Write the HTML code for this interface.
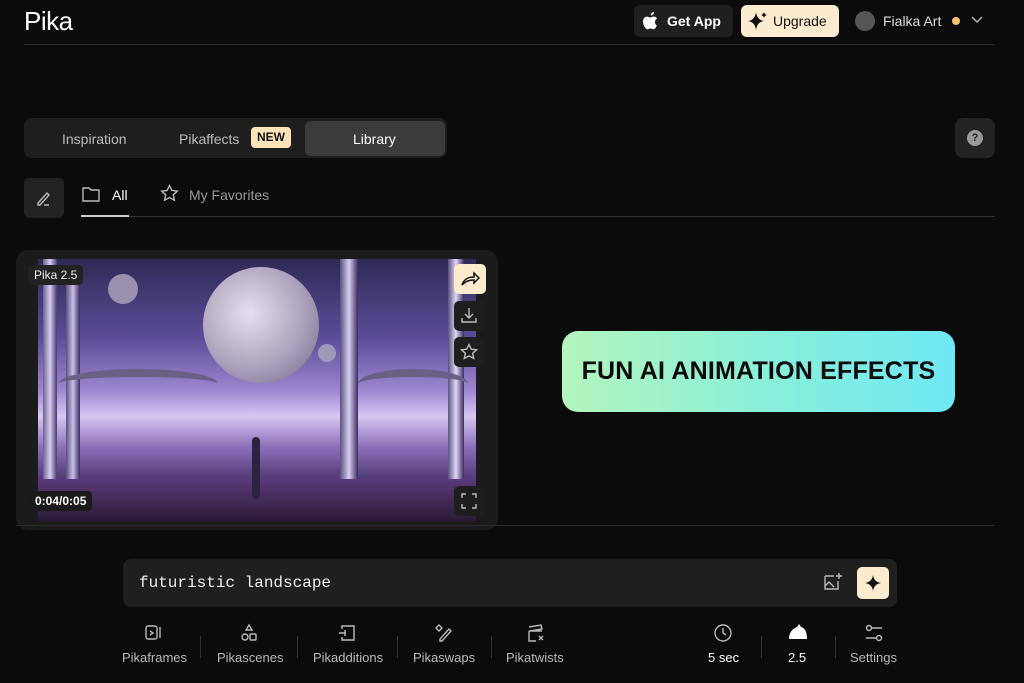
<!DOCTYPE html>
<html><head><style>
*{box-sizing:border-box;margin:0;padding:0}
body{width:1024px;height:683px;background:#0b0b0b;font-family:"Liberation Sans",sans-serif;color:#ddd;position:relative;overflow:hidden}
.a{position:absolute}
.t{font-size:13px;color:#bbb}
.ic{stroke:#bbb;fill:none;stroke-width:1.4}
</style></head><body>
<div class="a" style="left:24px;top:6px;font-size:26px;color:#fff;letter-spacing:-0.5px">Pika</div>
<div class="a" style="left:634px;top:5px;width:99px;height:32px;background:#1f1f1f;border-radius:6px"></div>
<svg class="a" style="left:642px;top:11px" width="18" height="20" viewBox="0 0 18 20"><path d="M12 1c0 2-1.5 3.5-3.3 3.5C8.5 2.6 10 1.2 12 1zM14.8 14.5c-.7 1.6-1.8 3.8-3.3 3.8-1.3 0-1.6-.8-3-.8s-1.8.8-3 .8C3.7 18.3 1 14.3 1 10.5 1 7.3 3 5.6 5 5.6c1.3 0 2.3.9 3.1.9.8 0 2-.9 3.5-.9.6 0 2.4.1 3.5 1.8-3 1.800-2.500 6 -.3 7.100z" fill="#fff"/></svg>
<div class="a" style="left:667px;top:13px;font-size:14px;font-weight:bold;color:#fff">Get App</div>
<div class="a" style="left:741px;top:5px;width:98px;height:32px;background:#fdebd0;border-radius:6px"></div>
<svg class="a" style="left:747px;top:10px" width="22" height="22" viewBox="0 0 22 22"><path d="M9 2 Q10 10 17 11 Q10 12 9 20 Q8 12 1 11 Q8 10 9 2Z" fill="#111"/><path d="M17 2 Q17.5 4.5 20 5 Q17.5 5.5 17 8 Q16.5 5.5 14 5 Q16.5 4.5 17 2Z" fill="#111"/></svg>
<div class="a" style="left:773px;top:13px;font-size:14px;color:#111">Upgrade</div>
<div class="a" style="left:855px;top:11px;width:20px;height:20px;border-radius:50%;background:#555"></div>
<div class="a" style="left:883px;top:13px;font-size:14px;color:#ddd">Fialka Art</div>
<div class="a" style="left:952px;top:17px;width:8px;height:8px;border-radius:50%;background:#f5c36b"></div>
<svg class="a" style="left:970px;top:15px" width="14" height="10"><path d="M2 2l5 5 5-5" class="ic"/></svg>
<div class="a" style="left:24px;top:44px;width:971px;height:1px;background:#2a2a2a"></div>

<div class="a" style="left:24px;top:118px;width:423px;height:40px;background:#1e1e1e;border-radius:8px"></div>
<div class="a" style="left:305px;top:121px;width:140px;height:35px;background:#3b3b3b;border-radius:6px"></div>
<div class="a t" style="left:62px;top:131px;font-size:14px">Inspiration</div>
<div class="a t" style="left:179px;top:131px;font-size:14px">Pikaffects</div>
<div class="a" style="left:251px;top:127px;width:40px;height:21px;background:#fde4b8;border-radius:4px;color:#111;font-size:12px;font-weight:bold;text-align:center;line-height:21px">NEW</div>
<div class="a" style="left:353px;top:131px;font-size:14px;color:#fff">Library</div>
<div class="a" style="left:955px;top:118px;width:40px;height:40px;background:#232323;border-radius:8px"></div>
<div class="a" style="left:967px;top:130px;width:16px;height:16px;border-radius:50%;background:#999;color:#222;font-size:11px;font-weight:bold;text-align:center;line-height:16px">?</div>

<div class="a" style="left:24px;top:178px;width:40px;height:40px;background:#222;border-radius:6px"></div>
<svg class="a" style="left:34px;top:188px" width="20" height="20"><path d="M4 15l9-10 2 2-9 10H4z M10 17h5" class="ic" stroke="#ddd"/></svg>
<svg class="a" style="left:81px;top:185px" width="20" height="18"><path d="M2 3h6l2 2h8v11H2z" class="ic" stroke="#eee"/></svg>
<div class="a" style="left:112px;top:187px;font-size:14px;color:#fff">All</div>
<svg class="a" style="left:160px;top:184px" width="19" height="19"><path d="M9.5 1.5l2.4 5 5.4.6-4 3.7 1.1 5.4-4.9-2.7-4.9 2.7 1.1-5.4-4-3.7 5.4-.6z" class="ic" stroke="#999"/></svg>
<div class="a" style="left:189px;top:187px;font-size:14px;color:#999">My Favorites</div>
<div class="a" style="left:81px;top:216px;width:914px;height:1px;background:#333"></div>
<div class="a" style="left:81px;top:215px;width:48px;height:2px;background:#ccc"></div>

<div class="a" style="left:16px;top:250px;width:482px;height:280px;background:#1b1b1b;border-radius:12px"></div>
<div class="a" style="left:38px;top:259px;width:438px;height:262px;overflow:hidden;background:linear-gradient(180deg,#2e2a55 0%,#5c4c98 30%,#9c86d0 50%,#d7c8f2 60%,#8a6fb8 72%,#4d3670 85%,#2a1d3a 100%)">
 <div class="a" style="left:165px;top:8px;width:116px;height:116px;border-radius:50%;background:radial-gradient(circle at 40% 40%,#e6e0ee,#a79cb8 60%,#6d6480)"></div>
 <div class="a" style="left:70px;top:15px;width:30px;height:30px;border-radius:50%;background:#9a90b0"></div>
 <div class="a" style="left:280px;top:85px;width:18px;height:18px;border-radius:50%;background:#a098b8"></div>
 <div class="a" style="left:5px;top:0;width:14px;height:262px;background:linear-gradient(90deg,#6a6090,#d8d0f0,#4a3a70)"></div>
 <div class="a" style="left:28px;top:10px;width:14px;height:230px;background:linear-gradient(90deg,#5a4f80,#c8c0e8,#3a2a60)"></div>
 <div class="a" style="left:302px;top:0;width:18px;height:240px;background:linear-gradient(90deg,#5a4f80,#d8d0f0,#3a2a60)"></div>
 <div class="a" style="left:410px;top:0;width:16px;height:262px;background:linear-gradient(90deg,#5a4f80,#e0d8f8,#3a2a60)"></div>
 <div class="a" style="left:20px;top:110px;width:160px;height:30px;border-radius:50%;border-top:8px solid #6a5f85"></div>
 <div class="a" style="left:320px;top:110px;width:110px;height:30px;border-radius:50%;border-top:8px solid #6a5f85"></div>
 <div class="a" style="left:0;top:220px;width:438px;height:42px;background:linear-gradient(180deg,#5a3a7a,#2a1a35)"></div>
 <div class="a" style="left:214px;top:178px;width:8px;height:62px;background:#2a2440;border-radius:4px"></div>
</div>
<div class="a" style="left:28px;top:265px;padding:3px 6px;background:#222;border-radius:4px;font-size:12px;color:#eee">Pika 2.5</div>
<div class="a" style="left:29px;top:491px;padding:3px 6px;background:#1a1a1a;border-radius:4px;font-size:12px;font-weight:bold;color:#fff">0:04/0:05</div>
<div class="a" style="left:454px;top:264px;width:32px;height:30px;background:#fdebd0;border-radius:5px"></div>
<svg class="a" style="left:460px;top:270px" width="20" height="18"><path d="M2 15c2-6 6-8 12-8V3l5 5-5 5V10c-5 0-8 1-12 5z" fill="none" stroke="#111" stroke-width="1.5"/></svg>
<div class="a" style="left:454px;top:301px;width:30px;height:30px;background:#1e1e1e;border-radius:5px"></div>
<svg class="a" style="left:460px;top:306px" width="18" height="18"><path d="M9 2v10M5 8l4 4 4-4M2 12v4h14v-4" class="ic" stroke="#eee"/></svg>
<div class="a" style="left:454px;top:337px;width:30px;height:30px;background:#1e1e1e;border-radius:5px"></div>
<svg class="a" style="left:460px;top:343px" width="18" height="18"><path d="M9 1.5l2.3 4.7 5.2.6-3.8 3.5 1 5.1L9 12.9l-4.7 2.5 1-5.1L1.5 6.8l5.2-.6z" class="ic" stroke="#eee"/></svg>
<div class="a" style="left:454px;top:486px;width:30px;height:30px;background:#1e1e1e;border-radius:5px"></div>
<svg class="a" style="left:460px;top:492px" width="18" height="18"><path d="M2 6V2h4M12 2h4v4M16 12v4h-4M6 16H2v-4" class="ic" stroke="#eee"/></svg>

<div class="a" style="left:562px;top:331px;width:393px;height:81px;border-radius:16px;background:linear-gradient(90deg,#b4f5bd,#8af0d8 50%,#6fe8f5);color:#0a0a0a;font-weight:bold;font-size:25px;text-align:center;line-height:81px;letter-spacing:0.2px">FUN AI ANIMATION EFFECTS</div>

<div class="a" style="left:16px;top:525px;width:979px;height:1px;background:#2a2a2a"></div>

<div class="a" style="left:123px;top:559px;width:774px;height:48px;background:#1f1f1f;border-radius:8px"></div>
<div class="a" style="left:139px;top:574px;font-family:'Liberation Mono',monospace;font-size:16px;color:#eee">futuristic landscape</div>
<svg class="a" style="left:822px;top:572px" width="20" height="20"><path d="M3 4h9M3 4v13h13V9M3 14l4-4 5 5M17 1v6M14 4h6" class="ic" stroke="#777"/></svg>
<div class="a" style="left:857px;top:567px;width:32px;height:32px;background:#fdebd0;border-radius:5px"></div>
<svg class="a" style="left:863px;top:573px" width="20" height="20"><path d="M10 2Q11 9 18 10Q11 11 10 18Q9 11 2 10Q9 9 10 2Z" fill="#111"/></svg>

<svg class="a" style="left:143px;top:624px" width="20" height="18"><rect x="3" y="2" width="11" height="13" rx="2" class="ic"/><path d="M17 3v11M7 7l3 2-3 2" class="ic"/></svg>
<div class="a t" style="left:122px;top:650px">Pikaframes</div>
<div class="a" style="left:200px;top:636px;width:1px;height:22px;background:#333"></div>
<svg class="a" style="left:239px;top:623px" width="20" height="20"><path d="M10 2l3 5H7z" class="ic"/><rect x="3" y="11" width="6" height="6" rx="3" class="ic"/><rect x="11" y="11" width="6" height="6" rx="1" class="ic"/></svg>
<div class="a t" style="left:217px;top:650px">Pikascenes</div>
<div class="a" style="left:297px;top:636px;width:1px;height:22px;background:#333"></div>
<svg class="a" style="left:337px;top:623px" width="20" height="20"><path d="M5 6V3h12v14H5v-3M2 10h7M8 7v6" class="ic"/></svg>
<div class="a t" style="left:313px;top:650px">Pikadditions</div>
<div class="a" style="left:397px;top:636px;width:1px;height:22px;background:#333"></div>
<svg class="a" style="left:433px;top:623px" width="20" height="20"><path d="M3 5l3-3 3 3-3 3zM16 6l2 2-9 10H7v-2z" class="ic"/></svg>
<div class="a t" style="left:413px;top:650px">Pikaswaps</div>
<div class="a" style="left:491px;top:636px;width:1px;height:22px;background:#333"></div>
<svg class="a" style="left:526px;top:623px" width="20" height="20"><path d="M3 8h13M3 8v10h7M3 4l12-2 1 4-12 2M13 13l4 4M17 13l-4 4" class="ic"/></svg>
<div class="a t" style="left:506px;top:650px">Pikatwists</div>

<svg class="a" style="left:713px;top:623px" width="20" height="20"><circle cx="10" cy="10" r="8" class="ic" stroke="#ddd"/><path d="M10 5v5l3 2" class="ic" stroke="#ddd"/></svg>
<div class="a" style="left:708px;top:650px;font-size:13px;color:#fff">5 sec</div>
<div class="a" style="left:761px;top:636px;width:1px;height:22px;background:#333"></div>
<svg class="a" style="left:787px;top:623px" width="22" height="18"><path d="M2 16c0-6 3-10 8-12l2-3 2 3c4 1 6 5 6 12z" fill="#fff"/></svg>
<div class="a" style="left:788px;top:650px;font-size:13px;color:#fff">2.5</div>
<div class="a" style="left:835px;top:636px;width:1px;height:22px;background:#333"></div>
<svg class="a" style="left:864px;top:623px" width="20" height="20"><circle cx="5" cy="5" r="2.5" class="ic"/><path d="M8 5h10M2 15h10" class="ic"/><circle cx="15" cy="15" r="2.5" class="ic"/></svg>
<div class="a t" style="left:850px;top:650px">Settings</div>
</body></html>
